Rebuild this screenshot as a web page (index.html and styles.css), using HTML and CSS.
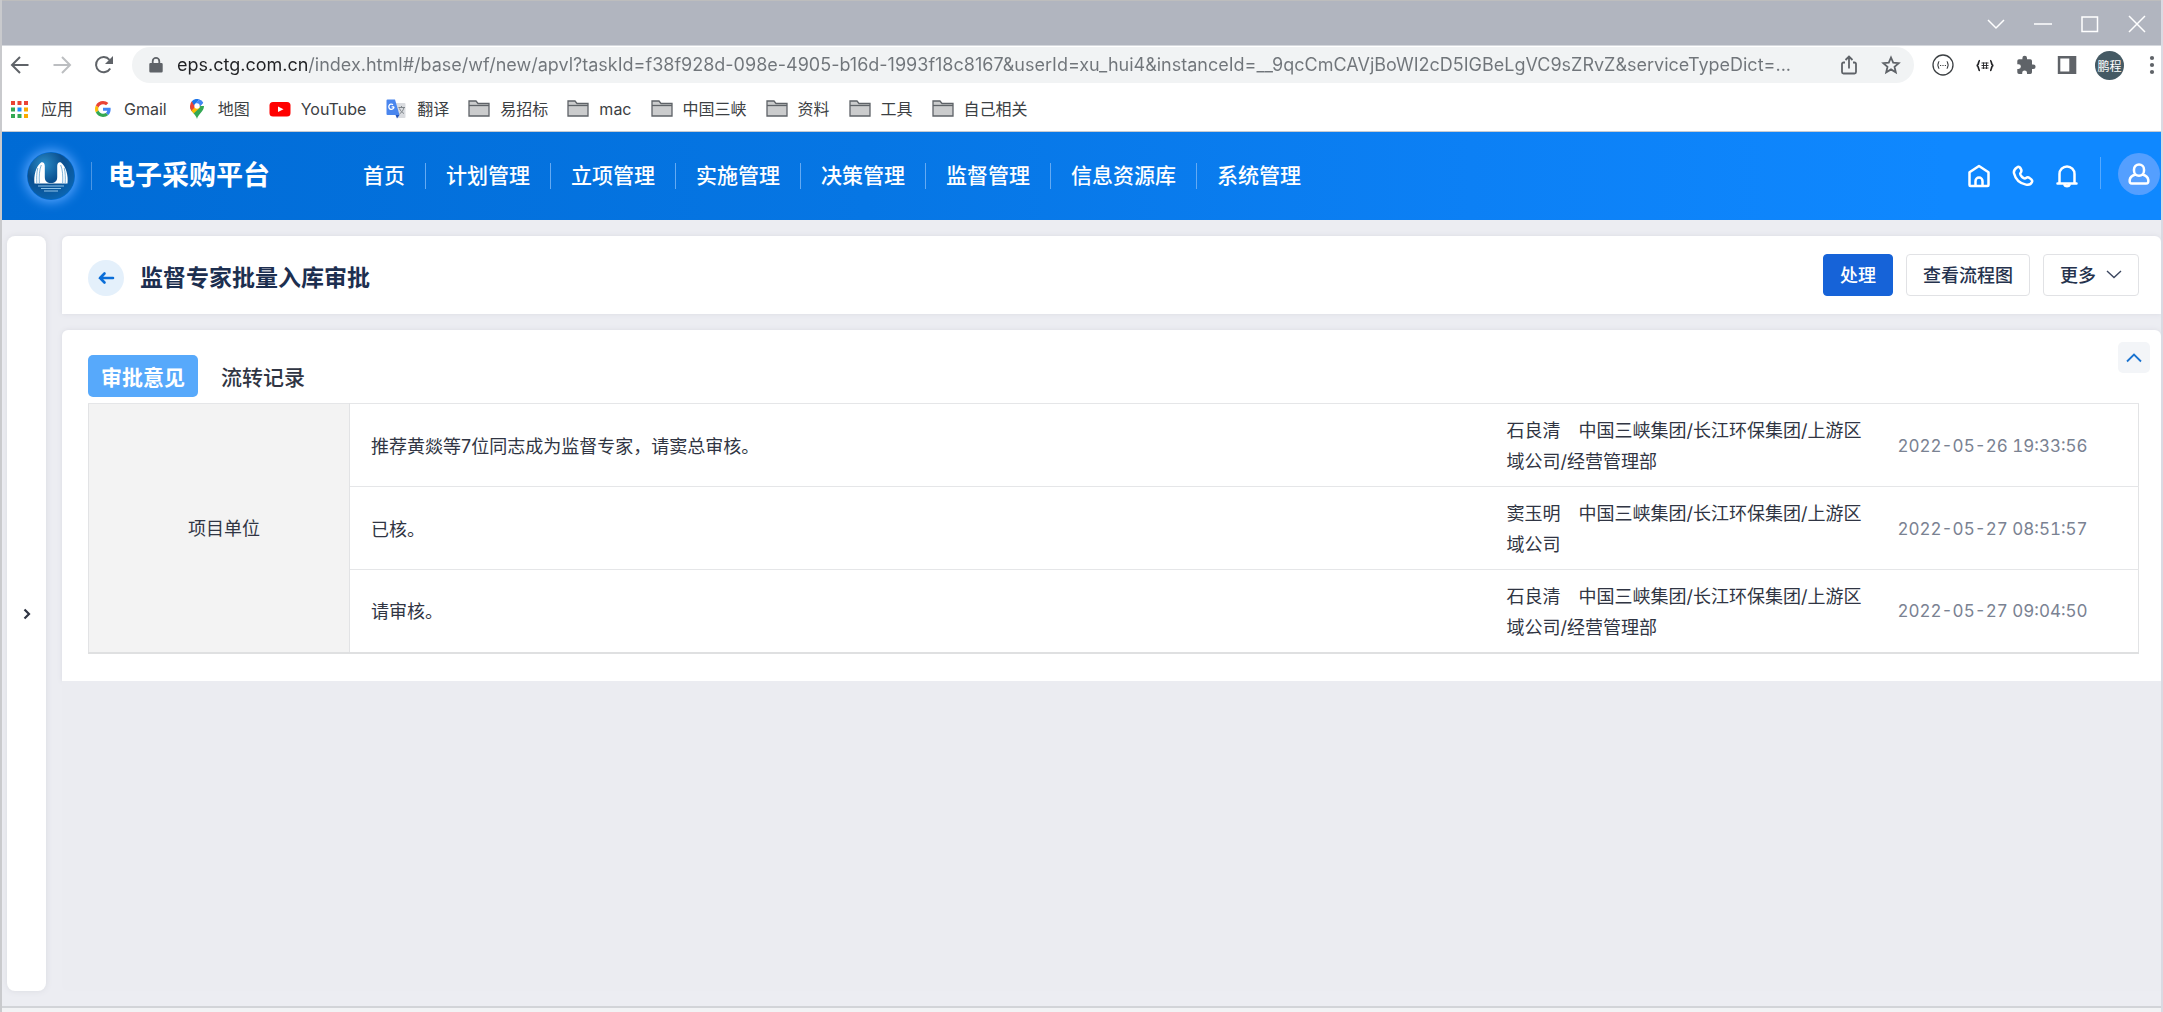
FILE: index.html
```html
<!DOCTYPE html>
<html lang="zh-CN">
<head>
<meta charset="utf-8">
<title>监督专家批量入库审批</title>
<link rel="stylesheet" href="styles.css">
</head>
<body>
<div class="window">
  <div class="titlebar">
    <button class="win-btn" aria-label="搜索标签页"><svg width="20" height="20" viewBox="0 0 20 20"><path d="M2 6l8 8 8-8"/></svg></button>
    <button class="win-btn" aria-label="最小化"><svg width="20" height="20" viewBox="0 0 20 20"><path d="M1 10h18"/></svg></button>
    <button class="win-btn" aria-label="最大化"><svg width="20" height="20" viewBox="0 0 20 20"><path d="M2 3h15.500v14.500H2z"/></svg></button>
    <button class="win-btn" aria-label="关闭"><svg width="20" height="20" viewBox="0 0 20 20"><path d="M2 2l16 16M18 2L2 18"/></svg></button>
  </div>

  <div class="toolbar">
    <div class="history">
      <button class="tool" aria-label="后退"><svg width="20" height="20" viewBox="0 0 20 20" class="line"><path d="M18.500 10H2.500M10 2L2 10l8 8"/></svg></button>
      <button class="tool tool-off" aria-label="前进"><svg width="20" height="20" viewBox="0 0 20 20" class="line"><path d="M1.500 10h16M10 2l8 8-8 8"/></svg></button>
      <button class="tool" aria-label="重新加载"><svg width="20" height="20" viewBox="0 0 20 20"><path d="M16.200 13.500A7.600 7.600 0 1 1 15.500 4.800" fill="none" stroke="currentColor" stroke-width="2"/><path d="M19 1v8h-8z" fill="currentColor"/></svg></button>
    </div>
    <div class="omnibox">
      <svg class="lock" width="14" height="18" viewBox="0 0 14 18"><path d="M1.500 7h11a1.200 1.200 0 0 1 1.200 1.200v7a1.200 1.200 0 0 1-1.200 1.200h-11a1.200 1.200 0 0 1-1.200-1.200v-7A1.200 1.200 0 0 1 1.500 7z" fill="currentColor"/><path d="M3.700 8V5.200a3.300 3.300 0 0 1 6.600 0V8" fill="none" stroke="currentColor" stroke-width="1.800"/></svg>
      <input class="url" type="text" aria-label="地址" value="eps.ctg.com.cn/index.html#/base/wf/new/apvl?taskId=f38f928d-098e-4905-b16d-1993f18c8167&amp;userId=xu_hui4&amp;instanceId=__9qcCmCAVjBoWI2cD5IGBeLgVC9sZRvZ&amp;serviceTypeDict=...">
      <button class="tool" aria-label="分享"><svg width="20" height="20" viewBox="0 0 20 20" class="line thin"><path d="M6 7.500H4.500a1.500 1.500 0 0 0-1.500 1.500v8a1.500 1.500 0 0 0 1.500 1.500h11a1.500 1.500 0 0 0 1.500-1.500V9a1.500 1.500 0 0 0-1.500-1.500H14M10 13.500V2M6.500 5L10 1.500 13.500 5"/></svg></button>
      <button class="tool" aria-label="加入书签"><svg width="20" height="20" viewBox="0 0 20 20" class="line thin"><path d="M10 2.500l2.200 5.100 5.500.5-4.200 3.700 1.300 5.500-4.800-2.900-4.800 2.900 1.300-5.500L2.300 8.100l5.500-.5z"/></svg></button>
    </div>
    <div class="extensions">
      <button class="tool" aria-label="JSON 查看器"><svg width="22" height="22" viewBox="0 0 22 22"><circle cx="11" cy="11" r="10" fill="none" stroke="#3c4043" stroke-width="1.300"/><path d="M7.300 7.500c-1.500 0-.6 3.500-2 3.500 1.400 0 .5 3.500 2 3.500M14.700 7.500c1.500 0 .6 3.500 2 3.500-1.400 0-.5 3.500-2 3.500" fill="none" stroke="#3c4043" stroke-width="1.200"/><path d="M8 11.500h1.200M10.400 11.500h1.200M12.800 11.500H14" stroke="#3c4043" stroke-width="1.200"/></svg></button>
      <button class="tool" aria-label="FeHelper"><svg width="20" height="20" viewBox="0 0 20 20"><path d="M5 5.500C2.600 5.500 4.500 10.500 1.500 10.500 4.500 10.500 2.600 15.500 5 15.500M15 5.500c2.400 0 .5 5 3.500 5-3 0-1.100 5-3.500 5" fill="none" stroke="#202124" stroke-width="1.700"/><path d="M6.500 8h7M6.500 10.500h7M6.500 13h7M8.500 7.500v6.500M11.500 7.500v6.500" stroke="#202124" stroke-width=".9"/></svg></button>
      <button class="tool" aria-label="扩展程序"><svg width="20" height="20" viewBox="0 0 20 20"><path d="M17.300 9.500H16V6a1.700 1.700 0 0 0-1.700-1.700H11V3a2.300 2.300 0 0 0-4.600 0v1.300H3A1.700 1.700 0 0 0 1.300 6v3.200h1.200a2.400 2.400 0 0 1 0 4.800H1.300v3.300A1.700 1.700 0 0 0 3 19h3.200v-1.200a2.400 2.400 0 0 1 4.800 0V19h3.300a1.700 1.700 0 0 0 1.700-1.700v-3.200h1.300a2.300 2.300 0 0 0 0-4.600z" fill="currentColor"/></svg></button>
      <button class="tool" aria-label="侧边栏"><svg width="20" height="20" viewBox="0 0 20 20"><path d="M.800 1h18.500v18H.800zM3.300 3.500v13h9v-13z" fill="currentColor" fill-rule="evenodd"/></svg></button>
      <button class="profile" aria-label="用户">鹏程</button>
      <button class="tool dots" aria-label="更多选项"><svg width="6" height="20" viewBox="0 0 6 20" fill="currentColor"><circle cx="3" cy="3" r="2.100"/><circle cx="3" cy="10" r="2.100"/><circle cx="3" cy="17" r="2.100"/></svg></button>
    </div>
  </div>

  <nav class="bookmarks" aria-label="书签">
    <a href="#"><svg width="22" height="20" viewBox="0 0 22 20"><g fill="#ea4335"><path d="M2 2h4v4H2zM8.500 2h4v4h-4zM15 2h4v4h-4z"/></g><path d="M2 8.500h4v4H2zM2 15h4v4H2zM8.500 15h4v4h-4z" fill="#34a853"/><path d="M8.500 8.500h4v4h-4z" fill="#1a8cff"/><path d="M15 8.500h4v4h-4zM15 15h4v4h-4z" fill="#fbab00"/></svg>应用</a>
    <a href="#"><svg width="22" height="16" viewBox="0 0 48 48"><path fill="#EA4335" d="M24 9.500c3.540 0 6.710 1.220 9.210 3.600l6.850-6.850C35.900 2.380 30.470 0 24 0 14.620 0 6.510 5.380 2.560 13.220l7.980 6.190C12.430 13.720 17.740 9.500 24 9.500z"/><path fill="#4285F4" d="M46.980 24.550c0-1.570-.15-3.090-.38-4.550H24v9.020h12.940c-.58 2.960-2.260 5.480-4.780 7.180l7.730 6c4.510-4.180 7.090-10.360 7.090-17.650z"/><path fill="#FBBC05" d="M10.530 28.590c-.48-1.450-.76-2.990-.76-4.590s.27-3.140.76-4.590l-7.980-6.190C.92 16.460 0 20.120 0 24s.92 7.540 2.560 10.780l7.970-6.190z"/><path fill="#34A853" d="M24 48c6.480 0 11.930-2.130 15.890-5.810l-7.730-6c-2.150 1.450-4.920 2.300-8.160 2.300-6.260 0-11.570-4.220-13.470-9.910l-7.980 6.190C6.510 42.620 14.620 48 24 48z"/></svg>Gmail</a>
    <a href="#"><svg width="22" height="20" viewBox="0 0 20 20"><path d="M10 20C9 15 3 12.500 3 7l7 0 7 0c0 5.500-6 8-7 13z" fill="#34a853"/><path d="M3 7a7 7 0 0 1 1.800-4.700L10 7l-5 5.500C3.800 11 3 9.300 3 7z" fill="#ea4335"/><path d="M4.800 2.300A7 7 0 0 1 12.300.400L7 6.500z" fill="#1a73e8"/><path d="M12.300.400A7 7 0 0 1 16.200 3.800L10 11z" fill="#4285f4"/><path d="M4.500 11.800L14 1.500l-1 7-6.300 6z" fill="#fbbc04"/><path d="M12.300.400A7 7 0 0 1 16.200 3.800L12 8 9 4z" fill="#4285f4"/><circle cx="10" cy="7" r="2.700" fill="#fff"/></svg>地图</a>
    <a href="#"><svg width="22" height="20" viewBox="0 0 22 20"><rect x=".5" y="3" width="21" height="14.500" rx="3.500" fill="#f00"/><path d="M9 7.500l5.500 2.800L9 13z" fill="#fff"/></svg>YouTube</a>
    <a href="#"><svg width="22" height="20" viewBox="0 0 20 20"><path d="M8 4h10.500a1 1 0 0 1 1 1v13a1 1 0 0 1-1 1H12z" fill="#dadce0"/><path d="M1.500.500H9L13.500 16h-12a1 1 0 0 1-1-1V1.500a1 1 0 0 1 1-1z" fill="#4a86ee"/><path d="M9.500 16h4L11 19.500z" fill="#2554b8"/><path d="M8 7.800H5.600M8 7.800A2.600 2.600 0 1 1 7 5.700" fill="none" stroke="#fff" stroke-width="1.300"/><path d="M12.500 8.500H19M15.500 7v1.500M18 8.500c-1 3.500-2.500 5-4.500 6.500M13.500 9.500c1 2.500 2.500 4 4.500 5" fill="none" stroke="#80868b"/></svg>翻译</a>
    <a href="#"><svg width="22" height="20" viewBox="0 0 22 20" class="folder"><path d="M1 17V2h7l2 2.500h11V17z"/><path d="M1 6.500h20"/></svg>易招标</a>
    <a href="#"><svg width="22" height="20" viewBox="0 0 22 20" class="folder"><path d="M1 17V2h7l2 2.500h11V17z"/><path d="M1 6.500h20"/></svg>mac</a>
    <a href="#"><svg width="22" height="20" viewBox="0 0 22 20" class="folder"><path d="M1 17V2h7l2 2.500h11V17z"/><path d="M1 6.500h20"/></svg>中国三峡</a>
    <a href="#"><svg width="22" height="20" viewBox="0 0 22 20" class="folder"><path d="M1 17V2h7l2 2.500h11V17z"/><path d="M1 6.500h20"/></svg>资料</a>
    <a href="#"><svg width="22" height="20" viewBox="0 0 22 20" class="folder"><path d="M1 17V2h7l2 2.500h11V17z"/><path d="M1 6.500h20"/></svg>工具</a>
    <a href="#"><svg width="22" height="20" viewBox="0 0 22 20" class="folder"><path d="M1 17V2h7l2 2.500h11V17z"/><path d="M1 6.500h20"/></svg>自己相关</a>
  </nav>

  <header class="site-header">
    <svg class="logo" width="48" height="48" viewBox="0 0 48 48">
      <defs><radialGradient id="ball" cx=".35" cy=".25" r=".8"><stop offset="0" stop-color="#2a8cc8"/><stop offset=".5" stop-color="#0a4f8f"/><stop offset="1" stop-color="#0a66b4"/></radialGradient></defs>
      <circle cx="24" cy="24" r="23.500" fill="url(#ball)"/>
      <path d="M14 10.500c2-.8 3.800.5 3.800 3.500v11c0 4 2.200 6 6.200 6s6.200-2 6.200-6V14c0-3 1.800-4.300 3.800-3.500 5 4 7.500 13 6.500 21H7.500c-1-8 1.500-17 6.500-21z" fill="#fff"/>
      <path d="M14.300 13c-2 5-2.300 11-2 18M10.800 16c-1.300 5-1.200 10-1 15M33.700 13c2 5 2.300 11 2 18M37.200 16c1.300 5 1.200 10 1 15" fill="none" stroke="#5b9fd0" stroke-width=".8"/>
      <path d="M11 34h26M14 36.500h20M17 39h14" stroke="#8fc4ea" stroke-width="1.200"/>
    </svg>
    <span class="brand">电子采购平台</span>
    <nav class="menu" aria-label="主导航">
      <a href="#">首页</a><a href="#">计划管理</a><a href="#">立项管理</a><a href="#">实施管理</a><a href="#">决策管理</a><a href="#">监督管理</a><a href="#">信息资源库</a><a href="#">系统管理</a>
    </nav>
    <div class="header-tools">
      <button aria-label="主页"><svg width="24" height="24" viewBox="0 0 24 24"><path d="M2.500 8.200L12 2l9.500 6.200v12.800a1 1 0 0 1-1 1h-17a1 1 0 0 1-1-1z"/><path d="M8.500 21.500v-4.500a3.500 3.500 0 0 1 7 0v4.500"/></svg></button>
      <button aria-label="电话"><svg width="24" height="24" viewBox="0 0 24 24"><path d="M6.200 3.200c1.600-1.200 3 .3 3.900 2.200.8 1.700.3 2.600-.6 3.600-.8.900.2 2.600 1.600 4 1.500 1.400 2.900 1.800 3.900 1 1-.8 2.200-1 3.600 0 1.900 1.200 3.300 2.300 2.400 4-1 2.200-3.300 3.200-6 2.600C8.600 19.300 4.300 14.500 3 9.200c-.6-2.600 1.300-4.700 3.200-6z"/></svg></button>
      <button aria-label="通知"><svg width="24" height="24" viewBox="0 0 24 24"><path d="M2.500 19.500h19M4.500 19.500v-9.500a7.500 7.500 0 0 1 15 0v9.500M9.500 21c.6 1.700 4.400 1.700 5 0"/></svg></button>
    </div>
    <button class="account" aria-label="个人中心"><svg width="24" height="24" viewBox="0 0 24 24"><path d="M12 2.500a5 5 0 0 1 5 5v1.300a5 5 0 0 1-10 0V7.500a5 5 0 0 1 5-5zM8.600 12.500C5 13.500 3 15.500 2.700 18c-.3 2.500.5 3.500 2.300 3.500h14c1.800 0 2.600-1 2.300-3.500-.3-2.500-2.300-4.500-5.900-5.500"/></svg></button>
  </header>

  <div class="workspace">
    <aside class="sidebar">
      <button aria-label="展开侧栏"><svg width="12" height="14" viewBox="0 0 12 14"><path d="M3.500 2.500L8 7l-4.500 4.500"/></svg></button>
    </aside>
    <main class="main">
      <section class="card page-head">
        <button class="back" aria-label="返回"><svg width="20" height="20" viewBox="0 0 20 20"><path d="M17 10H4M8.500 5.500L4 10l4.500 4.500"/></svg></button>
        <h1>监督专家批量入库审批</h1>
        <div class="actions">
          <button class="btn btn-primary">处理</button>
          <button class="btn">查看流程图</button>
          <button class="btn">更多<svg width="16" height="16" viewBox="0 0 16 16"><path d="M1 5l7 6.500L15 5"/></svg></button>
        </div>
      </section>
      <section class="card opinions">
        <div class="tabs" role="tablist">
          <button class="tab tab-active" role="tab" aria-selected="true">审批意见</button>
          <button class="tab" role="tab" aria-selected="false">流转记录</button>
        </div>
        <button class="collapse" aria-label="收起"><svg width="18" height="18" viewBox="0 0 18 18"><path d="M2 12.500l7-7 7 7"/></svg></button>
        <table>
          <colgroup><col class="col-unit"><col><col class="col-person"><col class="col-time"></colgroup>
          <tbody>
            <tr><th scope="rowgroup" rowspan="3">项目单位</th><td>推荐黄燚等7位同志成为监督专家，请窦总审核。</td><td class="person">石良清　中国三峡集团/长江环保集团/上游区域公司/经营管理部</td><td class="time">2022-05-26 19:33:56</td></tr>
            <tr><td>已核。</td><td class="person">窦玉明　中国三峡集团/长江环保集团/上游区域公司</td><td class="time">2022-05-27 08:51:57</td></tr>
            <tr><td>请审核。</td><td class="person">石良清　中国三峡集团/长江环保集团/上游区域公司/经营管理部</td><td class="time">2022-05-27 09:04:50</td></tr>
          </tbody>
        </table>
      </section>
      <div class="filler"></div>
    </main>
  </div>
  <div class="statusbar"></div>
</div>
</body>
</html>
```
FILE: styles.css
```css
* { box-sizing: border-box; }

body {
  margin: 0;
  font-family: Inter, "Noto Sans CJK SC", sans-serif;
  color: #303543;
  background: #ecedf2;
}

button {
  display: inline-flex;
  align-items: center;
  justify-content: center;
  padding: 0;
  border: 0;
  background: none;
  color: inherit;
  font: inherit;
}

a { color: inherit; text-decoration: none; white-space: nowrap; }
svg { display: block; flex: none; }

.window {
  display: flex;
  flex-direction: column;
  min-height: 100vh;
  border-left: 2px solid #c9cacd;
  border-right: 2px solid #d9dae2;
}

/* Browser frame */
.titlebar {
  display: flex;
  justify-content: flex-end;
  align-items: center;
  gap: 27px;
  height: 46px;
  padding: 2px 14px 0 0;
  background: #b1b5bf;
  border-top: 1px solid #bdbdbd;
  border-bottom: 1px solid #d5d8dd;
}
.win-btn path { fill: none; stroke: #fff; stroke-width: 1.5; }

.toolbar {
  display: flex;
  align-items: center;
  gap: 18px;
  height: 38px;
  padding: 0 6px 0 8px;
  background: #fff;
}
.tool { color: #5f6368; }
.tool-off { color: #bcbec1; }
.line { fill: none; stroke: currentColor; stroke-width: 2; }
.thin { stroke-width: 1.8; }
.history { display: flex; gap: 22px; }
.omnibox {
  flex: 1;
  display: flex;
  align-items: center;
  gap: 22px;
  height: 36px;
  padding: 0 13px 0 17px;
  border-radius: 18px;
  background: #f1f3f4;
}
.lock { margin-right: -8px; color: #5f6368; }
.url {
  flex: 1;
  min-width: 0;
  height: 36px;
  padding: 0;
  border: 0;
  outline: 0;
  font: 18px/36px Inter, sans-serif;
  color: transparent;
  background: linear-gradient(90deg, #202124 131px, #70757a 131px) text;
}
.extensions { display: flex; align-items: center; gap: 21px; }
.profile {
  width: 29px;
  height: 29px;
  margin: 0 4px 0 -3px;
  border-radius: 50%;
  background: #455a64;
  color: #fff;
  font-size: 12px;
}

.bookmarks {
  display: flex;
  align-items: center;
  gap: 19px;
  height: 48px;
  padding: 3px 8px 0 7px;
  background: #fff;
  border-bottom: 1px solid #c6cbd2;
  font-size: 16px;
  line-height: 24px;
  color: #3c4043;
}
.bookmarks a { display: flex; align-items: center; gap: 10px; }
.folder path { fill: #cbcccd; stroke: #5f6368; stroke-width: 1.3; }

/* Site header */
.site-header {
  display: flex;
  align-items: center;
  height: 88px;
  padding: 0 1px 0 25px;
  background: linear-gradient(90deg, #006bd5, #0676e4 40%, #0c80f5 68%, #0f88ff 90%);
  color: #fff;
}
.logo { border-radius: 50%; box-shadow: 0 0 12px 2px #5aa6ff; }
.brand {
  margin-left: 16px;
  padding-left: 16px;
  border-left: 1px solid #4b96e4;
  font-size: 27px;
  line-height: 28px;
  font-weight: 700;
  white-space: nowrap;
}
.menu { display: flex; margin-left: 73px; font-size: 21px; line-height: 26px; font-weight: 500; }
.menu a { padding: 0 20px; }
.menu a + a { border-left: 1px solid #64aaf3; }
.header-tools { display: flex; gap: 20px; margin-left: auto; padding-right: 21px; }
.header-tools path, .account path { fill: none; stroke: #fff; stroke-width: 2.5; stroke-linejoin: round; stroke-linecap: round; }
.account { position: relative; width: 42px; height: 42px; margin: 0 0 4px 18px; border-radius: 50%; background: #549fff; }
.account::before { content: ""; position: absolute; left: -18px; top: 4px; height: 32px; border-left: 1px solid #56a9ff; }

/* Work area */
.workspace { flex: 1; display: flex; gap: 16px; padding: 16px 0 15px 5px; }
.sidebar {
  display: flex;
  align-items: center;
  justify-content: center;
  width: 39px;
  border-radius: 8px;
  background: #fff;
  box-shadow: 0 0 6px #d9dae0;
}
.sidebar path { fill: none; stroke: #303543; stroke-width: 2.2; }
.main { flex: 1; display: flex; flex-direction: column; }
.card { background: #fff; border-radius: 6px 6px 0 0; box-shadow: 0 0 5px #d9dae2; }
.filler { flex: 1; background: #ebecf1; border-radius: 0 0 0 6px; position: relative; }

.page-head { display: flex; align-items: center; gap: 16px; height: 78px; margin-bottom: 16px; padding: 5px 22px 0 26px; }
.back { width: 36px; height: 36px; border-radius: 50%; background: #e4f0fb; }
.back path { fill: none; stroke: #0a6ed8; stroke-width: 2.6; stroke-linecap: round; }
h1 { margin: 0; font-size: 23px; line-height: 32px; font-weight: 700; color: #1d2f50; }
.actions { display: flex; gap: 13px; margin-left: auto; padding-bottom: 5px; }
.btn {
  gap: 10px;
  height: 42px;
  padding: 0 16px 2px;
  border: 1px solid #e1e2e5;
  border-radius: 4px;
  background: #fff;
  color: #25324d;
  font-size: 18px;
  font-weight: 500;
  white-space: nowrap;
}
.btn path { fill: none; stroke: #3c4760; stroke-width: 1.4; }
.btn-primary { background: #1663d8; border-color: #1663d8; color: #fff; }

.opinions { position: relative; padding: 25px 22px 27px 26px; }
.tabs { display: flex; gap: 10px; margin-bottom: 6px; }
.tab { height: 42px; padding: 0 13px; border-radius: 5px; font-size: 21px; font-weight: 500; }
.tab-active { background: #57a9fb; color: #fff; font-weight: 700; }
.collapse { position: absolute; top: 12px; right: 11px; width: 32px; height: 31px; border-radius: 5px; background: #f3f5f8; }
.collapse path { fill: none; stroke: #1a73d0; stroke-width: 1.8; }

table {
  width: 100%;
  table-layout: fixed;
  border-collapse: collapse;
  border: 1px solid #e2e3e5;
  border-bottom: 2px solid #dfe0e1;
  font-size: 18px;
  line-height: 31px;
}
.col-unit { width: 261px; }
.col-person { width: 391px; }
.col-time { width: 267px; }
th, td { height: 83px; padding: 2px 21px 0; border-top: 1px solid #e5e6e8; text-align: left; }
th { padding: 2px 0 0 10px; background: #f3f3f3; border-right: 1px solid #e2e3e5; text-align: center; font-weight: 400; }
.person { padding: 2px 0 0 26px; }
.time { padding: 2px 0 0 26px; color: #7a8292; font-size: 17px; white-space: nowrap; font-variant-numeric: tabular-nums; }

.statusbar { height: 6px; background: #f2f3f5; border-top: 2px solid #d2d4d8; }
```
